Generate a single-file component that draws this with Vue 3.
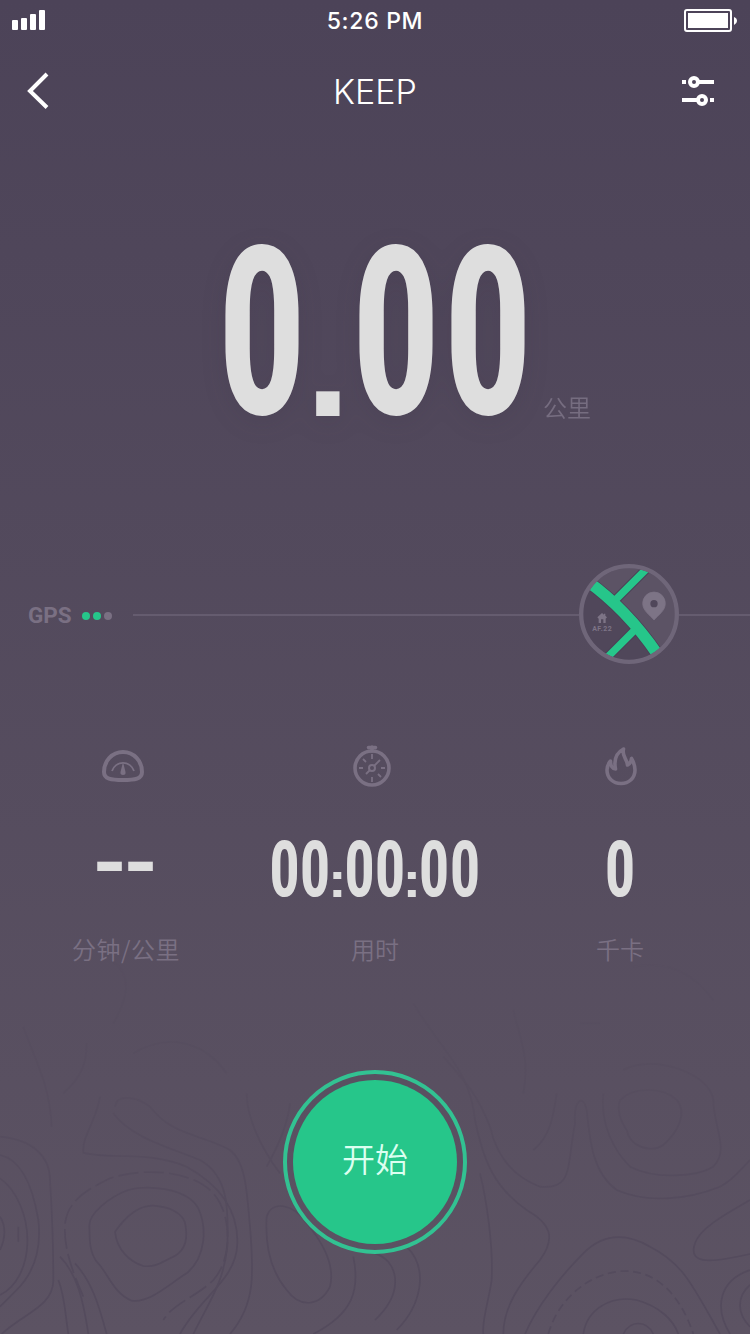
<script setup>
const distance = [225.5, 359.5, 451.5]
const clock = [0, 30.5, 75, 105.5, 149.5, 180.5]
const colons = [61, 135.5]
</script>

<template>
  <main class="screen">
    <svg class="contours" viewBox="0 0 2250 1122" preserveAspectRatio="none">
      <defs>
        <linearGradient id="fade" x1="0" y1="0" x2="0" y2="1122" gradientUnits="userSpaceOnUse">
          <stop offset="0" stop-color="#fff" stop-opacity="0.1" />
          <stop offset="0.35" stop-color="#fff" stop-opacity="0.4" />
          <stop offset="0.75" stop-color="#fff" stop-opacity="1" />
        </linearGradient>
        <mask id="fadeMask" maskUnits="userSpaceOnUse" x="0" y="0" width="2250" height="1122">
          <rect width="2250" height="1122" fill="url(#fade)" />
        </mask>
      </defs>
      <g mask="url(#fadeMask)" fill="none" stroke="#544b5d" stroke-width="5">
        <path d="M345 815C370 780 410 735 460 737C500 740 555 755 557 800C565 850 550 880 510 895C480 910 465 922 430 918C390 905 350 870 345 815Z" />
        <path d="M268 800C265 760 330 710 385 690C430 675 560 680 595 745C620 800 620 890 560 940C510 970 450 1030 395 1022C340 1000 325 940 290 905C265 870 270 830 268 800Z" />
        <path d="M250 1010C215 930 190 860 195 790C205 720 260 690 330 655C420 625 570 625 640 700C700 770 695 900 640 960C590 1010 520 1030 490 1080" stroke-dasharray="60 16" />
        <path d="M300 410C290 480 245 530 250 578C320 600 440 570 560 620C650 670 715 740 712 850C710 960 600 1010 540 1122" />
        <path d="M345 440C350 400 410 410 450 440C520 530 600 520 690 570C740 610 740 700 750 800C760 930 770 1030 690 1122" />
        <path d="M340 460C390 530 500 560 600 600C690 650 685 760 682 860C670 970 630 1020 580 1122" />
        <path d="M0 530C100 540 150 590 150 660C155 740 160 870 160 960C160 1040 70 1060 5 1122" />
        <path d="M0 585C70 600 100 690 115 780C125 870 100 940 50 990L0 1040" />
        <path d="M0 655C50 690 85 770 82 850C80 920 50 980 0 1005M0 770C20 800 15 840 0 870M55 800V845" />
        <path d="M180 890C230 940 250 1020 265 1122M175 960C195 1010 195 1060 205 1122M225 910C280 970 300 1050 320 1122" />
        <path d="M800 770C815 720 880 730 920 790C970 850 1005 920 990 980C960 1040 900 1045 860 990C810 930 795 850 800 770Z" />
        <path d="M870 430C860 520 810 600 800 620M740 400C740 470 780 560 840 640M1060 890C1080 990 1060 1060 940 1122" />
        <path d="M400 280C500 220 610 240 680 340M340 190C380 120 400 50 340 5M70 200C100 290 150 370 155 500M260 250C260 310 245 350 190 400" />
        <path d="M1125 880C1190 900 1220 990 1125 1080M1220 860C1290 930 1260 1040 1190 1110" />
        <path d="M1240 130C1330 280 1410 330 1425 480C1450 600 1480 680 1580 750C1650 790 1670 830 1620 900C1560 970 1510 1040 1510 1122" />
        <path d="M1330 290C1400 370 1430 400 1470 500C1490 590 1540 650 1620 680C1720 690 1700 620 1725 490C1720 420 1750 400 1760 450C1770 550 1780 640 1850 690C1940 730 2060 720 2160 680C2200 660 2220 630 2250 600" />
        <path d="M1810 400C1800 490 1840 570 1890 620C1970 660 2090 650 2140 620C2190 570 2140 500 2140 420C2130 340 1960 280 1870 330" />
        <path d="M1860 420C1900 380 1990 380 2030 420C2065 460 2030 520 1990 555C1950 580 1890 560 1880 510C1860 480 1850 450 1860 420Z" />
        <path d="M1440 640C1460 720 1480 860 1475 960C1465 1030 1445 1080 1450 1122" />
        <path d="M1575 1122C1610 1040 1680 950 1750 880C1810 820 1880 820 1950 860C2050 910 2080 980 2160 1122" />
        <path d="M1645 1122C1670 1030 1750 950 1850 935C1960 920 2040 1000 2080 1122" stroke-dasharray="24 14" />
        <path d="M1750 1122C1760 1050 1830 1005 1910 1020C1980 1040 2020 1080 2035 1122M1870 1122C1890 1080 1940 1080 1960 1122" />
        <path d="M2250 720C2200 750 2100 800 2085 850C2060 920 2150 905 2250 882M2250 930C2160 960 2140 1040 2190 1122M2250 975C2210 1010 2210 1060 2250 1100" />
        <path d="M1540 150C1560 240 1590 290 1570 400M1670 400C1660 470 1650 530 1600 570M1740 190H1800M1900 20C2000 0 2080 40 2140 120" />
      </g>
    </svg>

    <header>
      <div class="status">
        <svg class="signal" width="36" height="22" viewBox="0 0 36 22" fill="#fff">
          <rect x="0" y="10" width="6" height="10" rx="1" />
          <rect x="9" y="8" width="6" height="12" rx="1" />
          <rect x="18" y="4" width="6" height="16" rx="1" />
          <rect x="27" y="0" width="6" height="20" rx="1" />
        </svg>
        <time>5:26 PM</time>
        <svg class="battery" width="54" height="24" viewBox="0 0 54 24">
          <rect x="1" y="1" width="46" height="21" rx="2" fill="none" stroke="#fff" stroke-width="2" />
          <rect x="4" y="4" width="40" height="15" fill="#fff" />
          <path d="M50 8Q53 9 53 12Q53 14.5 50 16Z" fill="#fff" />
        </svg>
      </div>
      <nav>
        <svg width="24" height="40" viewBox="0 0 24 40">
          <path d="M20 3L3 20L20 36.500" fill="none" stroke="#fff" stroke-width="4" />
        </svg>
        <h1>KEEP</h1>
        <svg width="34" height="32" viewBox="0 0 34 32" fill="none" stroke="#fff" stroke-width="4">
          <path d="M0 7H4M17 7H32M0 25H15M28 25H32" />
          <circle cx="12" cy="7" r="4" />
          <circle cx="20" cy="25" r="4" />
        </svg>
      </nav>
    </header>

    <section class="distance">
      <svg class="total" width="750" height="210" viewBox="0 220 750 210">
        <text
          v-for="x in distance"
          :key="x"
          class="zero"
          :transform="`translate(${x + 36.5} 413.500) scale(0.75 1)`"
          font-size="236"
        >0</text>
        <text class="mark" transform="translate(317 416)" x="-12" font-size="165">.</text>
      </svg>
      <span class="unit">公里</span>
    </section>

    <section class="gps">
      <b>GPS</b>
      <i class="dot on"></i><i class="dot on"></i><i class="dot"></i>
      <div class="track"></div>
      <svg class="map" width="100" height="100" viewBox="57 42 300 300">
        <defs>
          <clipPath id="disc"><circle cx="207" cy="192" r="138" /></clipPath>
        </defs>
        <circle cx="207" cy="192" r="144" fill="#50475a" />
        <g clip-path="url(#disc)">
          <path d="M85 90Q205 175 300 310L370 300V30H80Z" fill="#5c5365" />
          <g fill="none" stroke="#4b4056">
            <path d="M80 92Q200 178 292 312" stroke-width="39" />
            <path d="M168 148L264 52M226 238L140 324" stroke-width="28" />
          </g>
          <g fill="none" stroke="#26c68a">
            <path d="M80 92Q200 178 292 312" stroke-width="34" />
            <path d="M168 148L264 52M226 238L140 324" stroke-width="22" />
          </g>
          <path d="M282 210C268 194 248 182 248 160A34 34 0 0 1 316 160C316 182 297 194 282 210Z" fill="#7d7486" stroke="#7d7486" stroke-width="2" />
          <circle cx="282" cy="161" r="11" fill="#50475a" />
          <path d="M126 189L112 202L116 206V219H123V208H130V219H137V206L141 202L136 197V191H132V194Z" fill="#7d7486" />
          <text x="126" y="244" class="place" textLength="59">AF.22</text>
        </g>
        <circle cx="207" cy="192" r="143.500" fill="none" stroke="#6f6679" stroke-width="13" />
      </svg>
      <div class="track tail"></div>
    </section>

    <section class="stats">
      <article>
        <svg class="icon" width="44" height="44" viewBox="0 0 44 44" fill="none" stroke="#7a7083" stroke-width="4">
          <path d="M22 5C33 5 41 14 41 25C41 32 34 33 22 33C10 33 3 32 3 25C3 14 11 5 22 5Z" />
          <path d="M11 24A11.500 11.500 0 0 1 33 24" stroke-width="1.800" />
          <path d="M22 15L24.500 25Q25 28 22 28Q19 28 19.500 25Z" fill="#7a7083" stroke="none" />
        </svg>
        <svg class="value" width="220" height="70" viewBox="0 0 220 70">
          <text class="mark" transform="translate(82 52) scale(1.15 0.92)" x="-3" font-size="84">-</text>
          <text class="mark" transform="translate(113 52) scale(1.15 0.92)" x="-3" font-size="84">-</text>
        </svg>
        <p class="wide">分钟/公里</p>
      </article>
      <article>
        <svg class="icon" width="44" height="44" viewBox="0 0 44 44" fill="none" stroke="#7a7083">
          <circle cx="22" cy="24" r="17" stroke-width="3.600" />
          <path d="M18.500 3.500H25.500M22 3V7" stroke-width="3.600" stroke-linecap="round" />
          <circle cx="22" cy="24" r="3" stroke-width="2" />
          <path d="M24 22L30 16M20 26L16 30M22 10V15M22 33V38M9 24H13M31 24H35M13 15L16 18M28 30L31 33" stroke-width="1.800" />
        </svg>
        <svg class="value" width="220" height="70" viewBox="0 0 220 70">
          <text
            v-for="x in clock"
            :key="x"
            class="zero"
            :transform="`translate(${x + 19.5} 61) scale(0.77 1)`"
            font-size="78.5"
          >0</text>
          <text
            v-for="x in colons"
            :key="'c' + x"
            class="mark"
            :transform="`translate(${x + 7} 61.500) scale(1 0.88)`"
            x="-5"
            font-size="56"
          >:</text>
        </svg>
        <p>用时</p>
      </article>
      <article>
        <svg class="icon" width="44" height="44" viewBox="0 0 44 44" fill="none" stroke="#7a7083" stroke-width="3.600" stroke-linejoin="round">
          <path d="M24.500 5C17 9 14.500 15 16.500 25C13.500 25 11.500 22 11.500 17C9 20 8 23 8 26C8 34 14 39.500 22 39.500C30 39.500 36 34 36 26C36 22 34.500 18 32.500 14.500C32 18 31 20 28.500 21C28 15 22.500 12 24.500 5Z" />
        </svg>
        <svg class="value" width="220" height="70" viewBox="0 0 220 70">
          <text class="zero" transform="translate(110 61) scale(0.77 1)" font-size="78.5">0</text>
        </svg>
        <p>千卡</p>
      </article>
    </section>

    <button class="start"><span>开始</span></button>
  </main>
</template>

<style scoped>
.screen {
  position: relative;
  box-sizing: border-box;
  width: 750px;
  height: 1334px;
  overflow: hidden;
  display: flex;
  flex-direction: column;
  align-items: center;
  background: linear-gradient(#4c4358, #5c5363);
  font-family: Inter, "Noto Sans CJK SC", sans-serif;
  color: #fff;
}
.contours {
  position: absolute;
  left: 0;
  bottom: 0;
  width: 750px;
  height: 374px;
}
header { width: 100%; height: 136px; }
.status {
  height: 42px;
  padding: 0 12px;
  display: grid;
  grid-template-columns: 1fr auto 1fr;
  align-items: center;
}
time { font-size: 23px; font-weight: 500; letter-spacing: 0.7px; }
.signal { align-self: start; margin-top: 10px; }
.battery { justify-self: end; align-self: start; margin-top: 9px; }
nav {
  height: 98px;
  padding: 0 34px 0 27px;
  display: grid;
  grid-template-columns: 1fr auto 1fr;
  align-items: center;
}
nav svg:last-child { justify-self: end; }
h1 { margin: 1px -7px 0 0; font-size: 34px; font-weight: 300; letter-spacing: 0; }
.distance { position: relative; width: 750px; height: 210px; margin-top: 84px; }
.zero {
  font-family: "Roboto Condensed", Roboto, sans-serif;
  font-stretch: 75%;
  font-weight: 700;
  text-anchor: middle;
  fill: #dedede;
}
.mark { font-family: "Liberation Sans", sans-serif; font-weight: 700; fill: #dedede; }
.total { display: block; overflow: visible; filter: drop-shadow(0 6px 12px rgba(50, 40, 60, 0.12)); }
.unit {
  position: absolute;
  left: 543px;
  bottom: 5px;
  font-family: "Noto Sans CJK SC", sans-serif;
  font-weight: 350;
  font-size: 24px;
  line-height: 36px;
  color: #766d80;
}
.gps {
  width: 722px;
  height: 100px;
  margin-top: 134px;
  padding-left: 28px;
  display: flex;
  align-items: center;
}
.gps b { width: 54px; font: 700 22.500px Roboto, sans-serif; color: #7a7083; position: relative; top: 1px; }
.dot { width: 8px; height: 8px; margin: 4px 3px 0 0; border-radius: 50%; background: #7a7083; }
.dot.on { background: #26c68a; }
.track { width: 446px; height: 2px; margin: 2px 0 0 18px; background: #655c6f; flex: none; }
.map { flex: none; }
.tail { width: 71px; margin-left: 0; }
.place { font: 700 21px Roboto, sans-serif; text-anchor: middle; fill: #7d7486; }
.stats { width: 750px; margin-top: 80px; display: grid; grid-template-columns: 250px 250px 240px; }
article { display: flex; flex-direction: column; align-items: center; }
.icon { display: block; margin-right: 6px; }
article:first-child .icon { margin-top: 3px; margin-bottom: -3px; margin-right: 4px; }
article:last-child .icon { margin: 0 -2px 0 0; }
.value { display: block; margin-top: 47px; overflow: visible; }
.stats p {
  margin: 26px 0 0;
  font-family: "Noto Sans CJK SC", sans-serif;
  font-weight: 350;
  font-size: 24px;
  line-height: 36px;
  color: #7a7083;
}
.stats .wide { letter-spacing: 0.5px; padding-left: 2px; }
.start {
  box-sizing: border-box;
  width: 184px;
  height: 184px;
  margin-top: 103px;
  padding: 6px;
  border: 4px solid #32c292;
  border-radius: 50%;
  background: none;
  position: relative;
}
.start span {
  display: flex;
  width: 100%;
  height: 100%;
  align-items: center;
  justify-content: center;
  box-sizing: border-box;
  padding-bottom: 8px;
  border-radius: 50%;
  background: #26c68a;
  color: #dbfff0;
  font: 350 33px "Noto Sans CJK SC", sans-serif;
}
</style>

<style>
body { margin: 0; background: #4c4358; }
</style>
